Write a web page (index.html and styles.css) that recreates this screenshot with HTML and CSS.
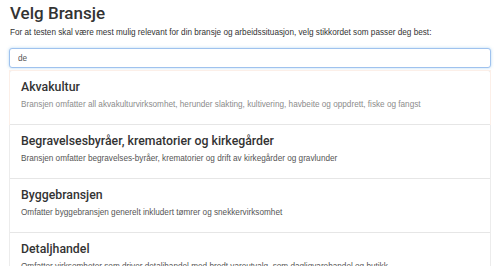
FILE: index.html
```html
<!DOCTYPE html>
<html>
<head>
    <title>Velg Bransje</title>
    <link rel="stylesheet" href="styles.css">
</head>
<body>
    <div class="container">
        <h1>Velg Bransje</h1>
        <p class="lead">For at testen skal være mest mulig relevant for din bransje og arbeidssituasjon, velg stikkordet som passer deg best:</p>

        <input type="text" id="search" class="search" value="de">

        <div class="list-group">
            <div class="list-item active">
                <h4>Akvakultur</h4>
                <p>Bransjen omfatter all akvakulturvirksomhet, herunder slakting, kultivering, havbeite og oppdrett, fiske og fangst</p>
            </div>
            <div class="list-item">
                <h4>Begravelsesbyråer, krematorier og kirkegårder</h4>
                <p>Bransjen omfatter begravelses-byråer, krematorier og drift av kirkegårder og gravlunder</p>
            </div>
            <div class="list-item">
                <h4>Byggebransjen</h4>
                <p>Omfatter byggebransjen generelt inkludert tømrer og snekkervirksomhet</p>
            </div>
            <div class="list-item">
                <h4>Detaljhandel</h4>
                <p>Omfatter virksomheter som driver detaljhandel med bredt vareutvalg, som dagligvarehandel og butikk</p>
            </div>
        </div>
    </div>
</body>
</html>
```

FILE: styles.css
```css
body {
    margin: 0;
    font-family: "Liberation Sans", Arial, sans-serif;
    color: #333;
    background-color: #fff;
    overflow: hidden;
}

.container {
    padding: 0 9px;
}

h1 {
    font-family: Roboto, "Liberation Sans", sans-serif;
    font-size: 17px;
    line-height: 20px;
    font-weight: 500;
    margin: 3px 0 0 1px;
    color: #333;
}

.lead {
    font-size: 8.2px;
    line-height: 10px;
    margin: 5px 0 0 1px;
    color: #333;
}

.search {
    display: block;
    box-sizing: border-box;
    width: 482px;
    height: 20px;
    margin-top: 10px;
    padding: 0 8px;
    font-family: "Liberation Sans", Arial, sans-serif;
    font-size: 8.2px;
    color: #555;
    border: 1px solid #9fc2ee;
    border-radius: 3px;
    box-shadow: 0 0 3px rgba(102, 175, 233, 0.5);
    outline: none;
}

.list-group {
    width: 480px;
    margin-top: 2px;
    border: 1px solid #ececec;
    border-bottom: none;
    border-radius: 3px 3px 0 0;
}

.list-item {
    height: 54px;
    box-sizing: border-box;
    padding: 9px 11px 0 11px;
    border-top: 1px solid #e6e6e6;
}

.list-item:first-child {
    height: 53px;
    border-top: none;
}

.list-item.active {
    box-shadow: 0 0 0 1px #fcefe8;
}

.list-item h4 {
    font-family: Roboto, "Liberation Sans", sans-serif;
    font-size: 12.3px;
    line-height: 14px;
    font-weight: 500;
    margin: 0;
    color: #333;
}

.list-item p {
    font-size: 8.2px;
    line-height: 10px;
    margin: 6px 0 0 0;
    color: #555;
}

.list-item.active p {
    color: #8c8c8c;
}
```
